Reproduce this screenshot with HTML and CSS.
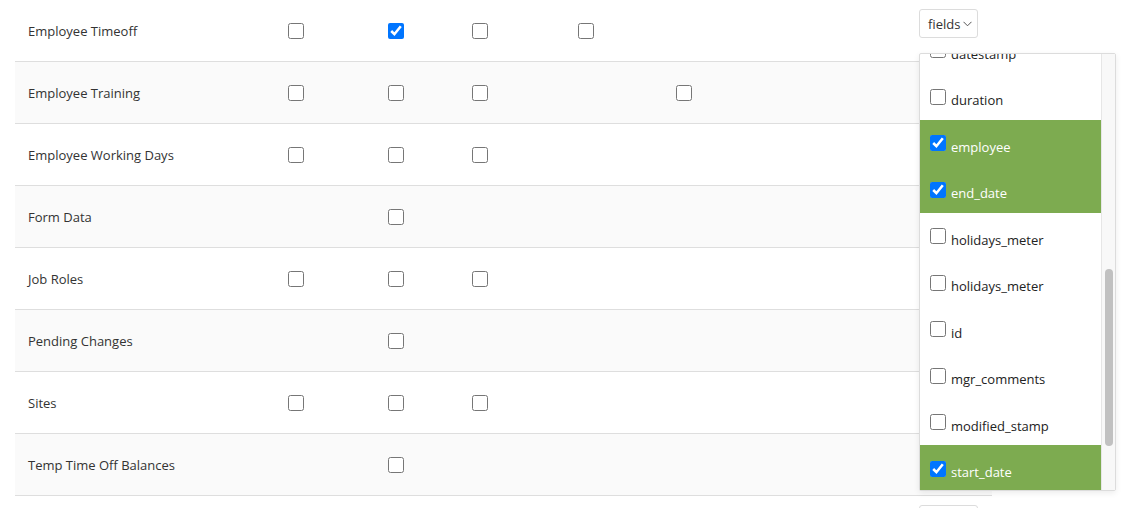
FILE: index.html
```html
<!DOCTYPE html>
<html>
<head>
<meta charset="utf-8">
<link rel="stylesheet" href="styles.css">
</head>
<body>
<div class="table">
  <div class="row">
    <div class="cell label">Employee Timeoff</div>
    <div class="cell"><input type="checkbox" class="cb"></div>
    <div class="cell"><input type="checkbox" class="cb" checked></div>
    <div class="cell"><input type="checkbox" class="cb"></div>
    <div class="cell"><input type="checkbox" class="cb"></div>
    <div class="cell"></div>
    <div class="cell fields-cell">
      <button class="fields-btn">fields<svg class="chev" width="9" height="6" viewBox="0 0 9 6"><polyline points="0.5,0.8 4.5,4.8 8.5,0.8" fill="none" stroke="#555" stroke-width="1"/></svg></button>
      <div class="menu">
        <div class="menu-list">
          <label class="item"><input type="checkbox" class="cb"><span>approved</span></label>
          <label class="item"><input type="checkbox" class="cb"><span>approved_by</span></label>
          <label class="item"><input type="checkbox" class="cb"><span>approved_date</span></label>
          <label class="item"><input type="checkbox" class="cb"><span>comments</span></label>
          <label class="item"><input type="checkbox" class="cb"><span>created_by</span></label>
          <label class="item"><input type="checkbox" class="cb"><span>created_stamp</span></label>
          <label class="item"><input type="checkbox" class="cb"><span>date_from</span></label>
          <label class="item"><input type="checkbox" class="cb"><span>date_to</span></label>
          <label class="item"><input type="checkbox" class="cb"><span>day_part</span></label>
          <label class="item"><input type="checkbox" class="cb"><span>days</span></label>
          <label class="item"><input type="checkbox" class="cb"><span>declined</span></label>
          <label class="item"><input type="checkbox" class="cb"><span>datestamp</span></label>
          <label class="item"><input type="checkbox" class="cb"><span>duration</span></label>
          <label class="item selected"><input type="checkbox" class="cb" checked><span>employee</span></label>
          <label class="item selected"><input type="checkbox" class="cb" checked><span>end_date</span></label>
          <label class="item"><input type="checkbox" class="cb"><span>holidays_meter</span></label>
          <label class="item"><input type="checkbox" class="cb"><span>holidays_meter</span></label>
          <label class="item"><input type="checkbox" class="cb"><span>id</span></label>
          <label class="item"><input type="checkbox" class="cb"><span>mgr_comments</span></label>
          <label class="item"><input type="checkbox" class="cb"><span>modified_stamp</span></label>
          <label class="item selected"><input type="checkbox" class="cb" checked><span>start_date</span></label>
          <label class="item"><input type="checkbox" class="cb"><span>status</span></label>
          <label class="item"><input type="checkbox" class="cb"><span>type</span></label>
        </div>
        <div class="scrollbar"><div class="thumb"></div></div>
      </div>
    </div>
  </div>
  <div class="row alt">
    <div class="cell label">Employee Training</div>
    <div class="cell"><input type="checkbox" class="cb"></div>
    <div class="cell"><input type="checkbox" class="cb"></div>
    <div class="cell"><input type="checkbox" class="cb"></div>
    <div class="cell"></div>
    <div class="cell"><input type="checkbox" class="cb"></div>
    <div class="cell fields-cell"><button class="fields-btn">fields<svg class="chev" width="9" height="6" viewBox="0 0 9 6"><polyline points="0.5,0.8 4.5,4.8 8.5,0.8" fill="none" stroke="#555" stroke-width="1"/></svg></button></div>
  </div>
  <div class="row">
    <div class="cell label">Employee Working Days</div>
    <div class="cell"><input type="checkbox" class="cb"></div>
    <div class="cell"><input type="checkbox" class="cb"></div>
    <div class="cell"><input type="checkbox" class="cb"></div>
    <div class="cell"></div>
    <div class="cell"></div>
    <div class="cell fields-cell"><button class="fields-btn">fields<svg class="chev" width="9" height="6" viewBox="0 0 9 6"><polyline points="0.5,0.8 4.5,4.8 8.5,0.8" fill="none" stroke="#555" stroke-width="1"/></svg></button></div>
  </div>
  <div class="row alt">
    <div class="cell label">Form Data</div>
    <div class="cell"></div>
    <div class="cell"><input type="checkbox" class="cb"></div>
    <div class="cell"></div>
    <div class="cell"></div>
    <div class="cell"></div>
    <div class="cell fields-cell"><button class="fields-btn">fields<svg class="chev" width="9" height="6" viewBox="0 0 9 6"><polyline points="0.5,0.8 4.5,4.8 8.5,0.8" fill="none" stroke="#555" stroke-width="1"/></svg></button></div>
  </div>
  <div class="row">
    <div class="cell label">Job Roles</div>
    <div class="cell"><input type="checkbox" class="cb"></div>
    <div class="cell"><input type="checkbox" class="cb"></div>
    <div class="cell"><input type="checkbox" class="cb"></div>
    <div class="cell"></div>
    <div class="cell"></div>
    <div class="cell fields-cell"><button class="fields-btn">fields<svg class="chev" width="9" height="6" viewBox="0 0 9 6"><polyline points="0.5,0.8 4.5,4.8 8.5,0.8" fill="none" stroke="#555" stroke-width="1"/></svg></button></div>
  </div>
  <div class="row alt">
    <div class="cell label">Pending Changes</div>
    <div class="cell"></div>
    <div class="cell"><input type="checkbox" class="cb"></div>
    <div class="cell"></div>
    <div class="cell"></div>
    <div class="cell"></div>
    <div class="cell fields-cell"><button class="fields-btn">fields<svg class="chev" width="9" height="6" viewBox="0 0 9 6"><polyline points="0.5,0.8 4.5,4.8 8.5,0.8" fill="none" stroke="#555" stroke-width="1"/></svg></button></div>
  </div>
  <div class="row">
    <div class="cell label">Sites</div>
    <div class="cell"><input type="checkbox" class="cb"></div>
    <div class="cell"><input type="checkbox" class="cb"></div>
    <div class="cell"><input type="checkbox" class="cb"></div>
    <div class="cell"></div>
    <div class="cell"></div>
    <div class="cell fields-cell"><button class="fields-btn">fields<svg class="chev" width="9" height="6" viewBox="0 0 9 6"><polyline points="0.5,0.8 4.5,4.8 8.5,0.8" fill="none" stroke="#555" stroke-width="1"/></svg></button></div>
  </div>
  <div class="row alt">
    <div class="cell label">Temp Time Off Balances</div>
    <div class="cell"></div>
    <div class="cell"><input type="checkbox" class="cb"></div>
    <div class="cell"></div>
    <div class="cell"></div>
    <div class="cell"></div>
    <div class="cell fields-cell"><button class="fields-btn">fields<svg class="chev" width="9" height="6" viewBox="0 0 9 6"><polyline points="0.5,0.8 4.5,4.8 8.5,0.8" fill="none" stroke="#555" stroke-width="1"/></svg></button></div>
  </div>
  <div class="row">
    <div class="cell label">Time Off Types</div>
    <div class="cell"></div>
    <div class="cell"><input type="checkbox" class="cb"></div>
    <div class="cell"></div>
    <div class="cell"></div>
    <div class="cell"></div>
    <div class="cell fields-cell"><button class="fields-btn">fields<svg class="chev" width="9" height="6" viewBox="0 0 9 6"><polyline points="0.5,0.8 4.5,4.8 8.5,0.8" fill="none" stroke="#555" stroke-width="1"/></svg></button></div>
  </div>
</div>
<script src="script.js"></script>
</body>
</html>
```
FILE: styles.css
```css
html, body {
  margin: 0;
  padding: 0;
  background: #fff;
  overflow: hidden;
}
body {
  font-family: "Open Sans", "Noto Sans", sans-serif;
  font-size: 13px;
  color: #333;
}
.table {
  margin-left: 15px;
  width: 977px;
}
.row {
  display: grid;
  grid-template-columns: 273px 100px 84px 106px 98px 243px 73px;
  height: 61px;
  border-bottom: 1px solid #dedede;
  background: #fff;
}
.row.alt {
  background: #fafafa;
}
.cell {
  display: flex;
  align-items: center;
}
.label {
  padding-left: 13px;
  padding-top: 1px;
}
.cb {
  width: 16px;
  height: 16px;
  margin: 0;
  flex: none;
}
.fields-cell {
  position: relative;
  align-items: flex-start;
  padding-top: 9px;
}
.fields-btn {
  display: flex;
  align-items: center;
  gap: 3px;
  height: 29px;
  width: 59px;
  padding: 0 0 0 8px;
  border: 1px solid #dcdcdc;
  border-radius: 3px;
  background: #fff;
  font-family: inherit;
  font-size: 13px;
  color: #333;
}
.chev {
  margin-top: 1px;
}
.menu {
  position: absolute;
  left: 0;
  top: 53px;
  width: 197px;
  height: 438px;
  box-sizing: border-box;
  border: 1px solid #dcdcdc;
  border-radius: 2px;
  background: #fff;
  box-shadow: 0 2px 6px rgba(0, 0, 0, 0.08);
  z-index: 5;
  display: flex;
}
.menu-list {
  flex: 1;
  overflow: hidden;
}
.scrollbar {
  width: 14px;
  box-sizing: border-box;
  border-left: 1px solid #e6e6e6;
  background: #f8f8f8;
  padding: 215px 2px 0 3px;
}
.thumb {
  height: 177px;
  background: #c1c1c1;
  border-radius: 4px;
}
.item {
  display: flex;
  align-items: center;
  gap: 5px;
  height: 46.5px;
  padding-left: 10px;
  color: #222;
}
.item .cb {
  margin-top: 1px;
}
.item span {
  padding-top: 8px;
}
.item.selected {
  background: #7dab50;
  color: #fff;
}
```
FILE: script.js
```js
document.querySelector('.menu-list').scrollTop = 539;
```
